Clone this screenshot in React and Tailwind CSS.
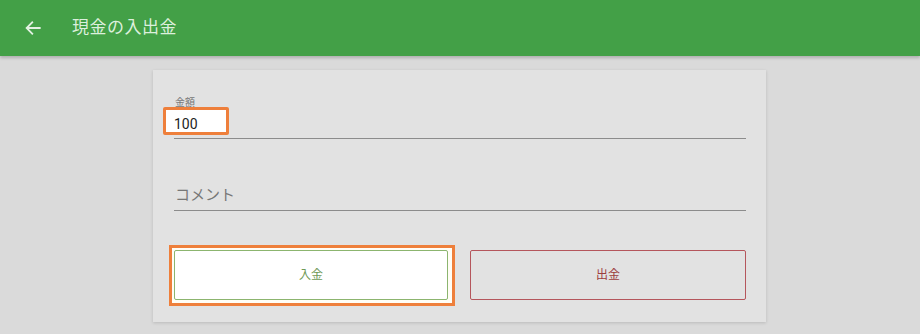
import React from 'react';

const font = { fontFamily: 'Roboto, "Noto Sans CJK JP", "Noto Sans", sans-serif' };

const Field = ({ label, value, placeholder, highlight }) => (
  <div className="relative">
    {label && <div className="text-[10px] leading-[12px] text-[#777] pl-[1px]">{label}</div>}
    <div className="h-[30px] flex items-center border-b border-[#8c8c8c] relative">
      {highlight && (
        <div className="absolute left-[-11px] top-[-2px] w-[66px] h-[28px] border-[3px] border-[#ee7f3b] bg-white rounded-[2px]"></div>
      )}
      {value ? (
        <span className="relative text-[14px] text-[#222] top-[1px]">{value}</span>
      ) : (
        <span className="text-[15px] text-[#777] pl-[1px]">{placeholder}</span>
      )}
    </div>
  </div>
);

export default function App() {
  return (
    <div className="w-[920px] h-[334px] bg-[#dadada] overflow-hidden" style={font}>
      <div className="h-[56px] bg-[#43a047] flex items-center shadow-[0_2px_3px_rgba(0,0,0,0.2)] relative z-10">
        <svg className="ml-[24px]" width="18" height="18" viewBox="0 0 24 24" fill="none" stroke="#e3f1e3" strokeWidth="2.4" strokeLinecap="square">
          <path d="M21 12H4M11 4.5L3.5 12l7.5 7.5" />
        </svg>
        <h1 className="ml-[30px] text-[17px] text-[#dcefdc] tracking-[0.5px]">現金の入出金</h1>
      </div>

      <div className="pt-[14px] pl-[153px]">
        <div className="w-[613px] bg-[#e2e2e2] shadow-[0_1px_3px_rgba(0,0,0,0.15)] pl-[21px] pr-[20px] pt-[27px] pb-[22px]">
          <Field label="金額" value="100" highlight />
          <div className="mt-[42px]">
            <Field placeholder="コメント" />
          </div>
          <div className="flex gap-[22px] mt-[39px]">
            <div className="relative flex-1">
              <div className="absolute left-[-5px] right-[-7px] top-[-5px] bottom-[-6px] border-[3px] border-[#ee7f3b] bg-[#fffdf5]"></div>
              <button className="relative w-full h-[50px] bg-white border border-[#8cb56f] rounded-[2px] text-[12px] text-[#6f9a57]">
                入金
              </button>
            </div>
            <button className="flex-1 h-[50px] border border-[#b5565c] rounded-[2px] text-[12px] text-[#9c3d3d]">
              出金
            </button>
          </div>
        </div>
      </div>
    </div>
  );
}
